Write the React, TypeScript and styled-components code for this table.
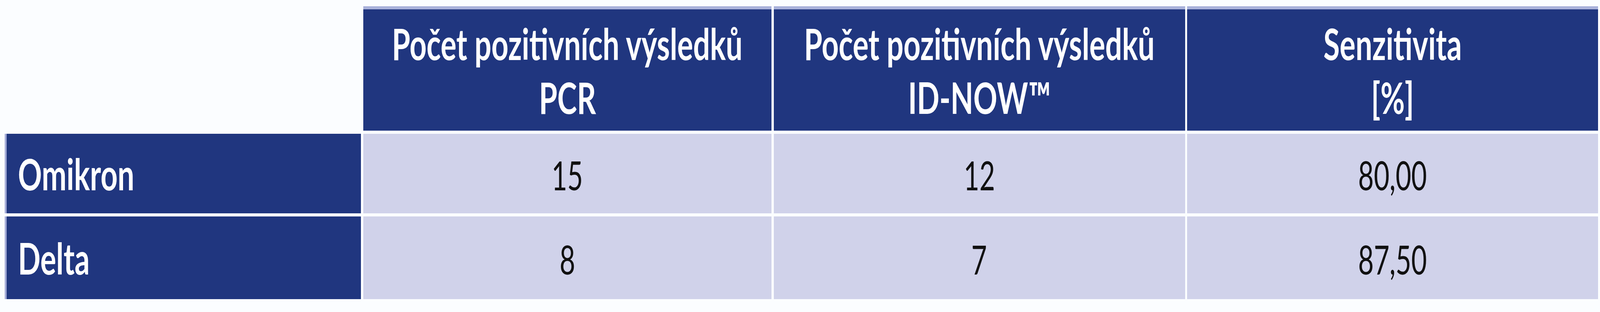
import React from "react";
import styled, { createGlobalStyle } from "styled-components";

/* Horizontal sizes are taken from the 6041px-wide reference and expressed
   as a share of the viewport width, so the table keeps its proportions
   even when the browser window is narrower than 6041px. */
const X = (px: number) => `calc(${px} * 100vw / 6041)`;

const Global = createGlobalStyle`
  html, body {
    margin: 0;
    padding: 0;
    background: #fbfdff;
    overflow: hidden;
  }
`;

const Page = styled.div`
  box-sizing: border-box;
  width: 100vw;
  height: 800px;
  padding: 16px 0 0 ${X(17)};
  background: #fbfdff;
  font-family: "Lato", "Open Sans", sans-serif;
`;

const Table = styled.div`
  display: grid;
  width: ${X(6016)};
  grid-template-columns: 1346fr 1542fr 1553fr 1551fr;
  grid-template-rows: 319px 204px 212px;
  column-gap: ${X(8)};
  row-gap: 8px;
`;

const Blank = styled.div``;

const HeadCell = styled.div`
  box-sizing: border-box;
  display: flex;
  flex-direction: column;
  justify-content: center;
  align-items: center;
  min-width: 0;
  background: #20367f;
  border-top: 8px solid #a9b1da;
  color: #ffffff;
  font-weight: 700;
  font-size: 112px;
  line-height: 138px;
  text-align: center;
  white-space: nowrap;
`;

const RowHead = styled.div`
  box-sizing: border-box;
  display: flex;
  align-items: center;
  min-width: 0;
  padding-left: ${X(44)};
  background: #20367f;
  border-left: ${X(8)} solid #a4acd8;
  color: #ffffff;
  font-weight: 700;
  font-size: 112px;
  line-height: 1.2;
  white-space: nowrap;
`;

const DataCell = styled.div`
  box-sizing: border-box;
  display: flex;
  align-items: center;
  justify-content: center;
  min-width: 0;
  padding-top: 8px;
  background: #d0d2ea;
  color: #111111;
  font-weight: 400;
  font-size: 102px;
  line-height: 1.2;
  white-space: nowrap;
`;

/* Text keeps the reference's glyph height; its width follows the
   horizontal scale of the viewport (--sx, 1 at 6041px). */
const Label = styled.span<{ $origin?: "left" | "center" }>`
  display: inline-block;
  flex: none;
  transform: scaleX(var(--sx, 1));
  transform-origin: ${(p) => (p.$origin === "left" ? "left center" : "center center")};
`;

const headers: [string, string][] = [
  ["Počet pozitivních výsledků", "PCR"],
  ["Počet pozitivních výsledků", "ID-NOW™"],
  ["Senzitivita", "[%]"],
];

const rows: { name: string; values: string[] }[] = [
  { name: "Omikron", values: ["15", "12", "80,00"] },
  { name: "Delta", values: ["8", "7", "87,50"] },
];

export default function App() {
  const sx =
    typeof window !== "undefined" ? Math.min(1, window.innerWidth / 6041) : 1;
  return (
    <>
      <Global />
      <Page style={{ ["--sx" as string]: sx } as React.CSSProperties}>
        <Table>
          <Blank />
          {headers.map(([a, b], i) => (
            <HeadCell key={i}>
              <Label>{a}</Label>
              <Label>{b}</Label>
            </HeadCell>
          ))}
          {rows.map((r) => (
            <React.Fragment key={r.name}>
              <RowHead>
                <Label $origin="left">{r.name}</Label>
              </RowHead>
              {r.values.map((v, j) => (
                <DataCell key={j}>
                  <Label>{v}</Label>
                </DataCell>
              ))}
            </React.Fragment>
          ))}
        </Table>
      </Page>
    </>
  );
}
